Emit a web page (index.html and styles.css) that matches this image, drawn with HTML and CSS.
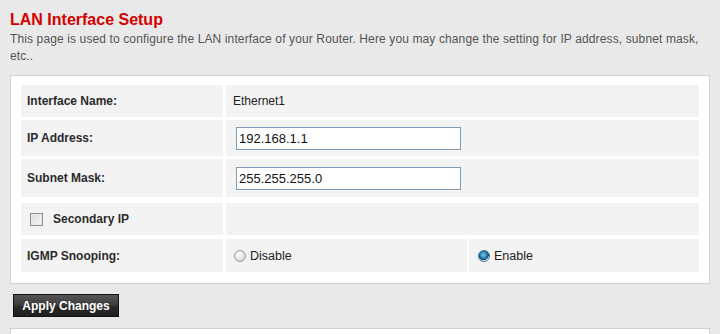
FILE: index.html
```html
<!DOCTYPE html>
<html>
<head>
<meta charset="utf-8">
<title>LAN Interface Setup</title>
<link rel="stylesheet" href="styles.css">
</head>
<body>
<h1 class="title">LAN Interface Setup</h1>
<p class="desc">This page is used to configure the LAN interface of your Router. Here you may change the setting for IP address, subnet mask, etc..</p>
<div class="panel">
  <div class="row r1">
    <div class="cell label">Interface Name:</div>
    <div class="cell value">Ethernet1</div>
  </div>
  <div class="row r2">
    <div class="cell label">IP Address:</div>
    <div class="cell field"><input class="text" type="text" value="192.168.1.1"></div>
  </div>
  <div class="row r3">
    <div class="cell label">Subnet Mask:</div>
    <div class="cell field"><input class="text" type="text" value="255.255.255.0"></div>
  </div>
  <div class="row r4">
    <div class="cell label check"><span class="box"></span><span>Secondary IP</span></div>
    <div class="cell"></div>
  </div>
  <div class="row r5 three">
    <div class="cell label">IGMP Snooping:</div>
    <div class="cell opt first"><span class="radio"></span><span>Disable</span></div>
    <div class="cell opt second"><span class="radio on"></span><span>Enable</span></div>
  </div>
</div>
<div class="actions"><button class="apply" type="button">Apply Changes</button></div>
<div class="panel next"></div>
</body>
</html>
```

FILE: styles.css
```css
html, body {
  margin: 0;
  padding: 0;
  background: #e9e9e9;
  font-family: "Liberation Sans", Arial, sans-serif;
  overflow: hidden;
}

.title {
  margin: 11px 0 0 10px;
  font-size: 16px;
  line-height: 18px;
  font-weight: bold;
  color: #d40000;
}

.desc {
  margin: 2px 10px 0 10px;
  font-size: 12px;
  line-height: 17px;
  letter-spacing: 0.12px;
  color: #555;
}

.panel {
  box-sizing: border-box;
  width: 700px;
  margin: 10px 0 0 10px;
  padding: 9px 10px 11px 10px;
  background: #fff;
  border: 1px solid #d2d2d2;
  display: flex;
  flex-direction: column;
}

.row {
  display: grid;
  grid-template-columns: 202px 1fr;
  column-gap: 3px;
}

.row.three {
  grid-template-columns: 202px 241px 1fr;
  column-gap: 3px;
}
.row.three .second { margin-left: -1px; }

.r1 { height: 32px; }
.r2 { height: 36px; margin-top: 3px; }
.r3 { height: 38px; margin-top: 3px; }
.r4 { height: 32px; margin-top: 6px; }
.r5 { height: 33px; margin-top: 4px; }

.cell {
  background: #f3f3f3;
  display: flex;
  align-items: center;
  font-size: 12px;
  color: #222;
}

.label {
  padding-left: 6px;
  font-weight: bold;
  color: #2b2b2b;
}

.value { padding-left: 7px; }

.field { padding-left: 10px; }

.text {
  box-sizing: border-box;
  width: 225px;
  height: 23px;
  margin: 1px 0 0 0;
  padding: 0 2px;
  border: 1px solid #7f9db9;
  background: #fff;
  font-family: "Liberation Sans", Arial, sans-serif;
  font-size: 13px;
  color: #111;
  outline: none;
}

.check { padding-left: 9px; }

.box {
  box-sizing: border-box;
  width: 13px;
  height: 13px;
  margin-right: 10px;
  border: 1px solid #8e8f8f;
  background: linear-gradient(135deg, #dcdcdc, #f7f7f7);
  box-shadow: inset 0 0 0 1px #e8e8e8;
}

.opt { padding-left: 9px; font-size: 12.5px; }
.opt.first { padding-left: 8px; }
.opt.second { padding-left: 9px; }

.radio {
  box-sizing: border-box;
  width: 12px;
  height: 12px;
  margin-right: 4px;
  border-radius: 50%;
  border: 1px solid #9a9a9a;
  background: radial-gradient(circle at 40% 35%, #ffffff 0%, #e4e4e4 55%, #c9c9c9 100%);
}

.radio.on {
  border-color: #4b6d85;
  background: radial-gradient(circle at 45% 40%, #7fc6e8 0%, #1f7bb0 45%, #0c3f66 62%, #e8f1f6 66%, #d5e2ea 100%);
}

.actions {
  margin: 10px 0 0 13px;
}

.apply {
  box-sizing: border-box;
  width: 106px;
  height: 23px;
  padding: 0;
  border: 1px solid #121212;
  background: linear-gradient(#565656, #3a3a3a 50%, #2a2a2a 51%, #1f1f1f);
  color: #fff;
  font-family: "Liberation Sans", Arial, sans-serif;
  font-size: 12px;
  font-weight: bold;
  cursor: pointer;
}

.panel.next {
  margin-top: 11px;
  height: 20px;
}
```
